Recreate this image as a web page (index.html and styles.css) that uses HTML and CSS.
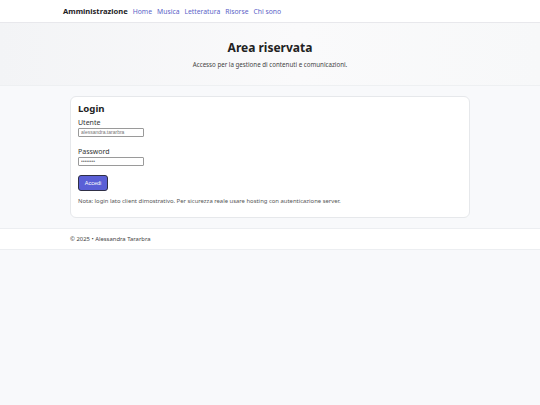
FILE: index.html
```html
<!DOCTYPE html>
<html lang="it">
<head>
    <meta charset="UTF-8">
    <meta name="viewport" content="width=device-width, initial-scale=1.0">
    <title>Area riservata</title>
    <link rel="stylesheet" href="styles.css">
</head>
<body>
    <nav class="topbar">
        <div class="nav-inner">
            <a href="#" class="brand">Amministrazione</a>
            <a href="#">Home</a>
            <a href="#">Musica</a>
            <a href="#">Letteratura</a>
            <a href="#">Risorse</a>
            <a href="#">Chi sono</a>
        </div>
    </nav>

    <header class="hero">
        <h1>Area riservata</h1>
        <p>Accesso per la gestione di contenuti e comunicazioni.</p>
    </header>

    <main class="container">
        <section class="card">
            <h2>Login</h2>
            <form class="login" onsubmit="return false">
                <label for="user">Utente</label>
                <input id="user" type="text" value="alessandra.tararbra">
                <label for="pass" class="spaced">Password</label>
                <input id="pass" type="password" value="password">
                <button type="submit">Accedi</button>
            </form>
            <p class="note">Nota: login lato client dimostrativo. Per sicurezza reale usare hosting con autenticazione server.</p>
        </section>
    </main>

    <footer class="footer">
        <div class="container">© 2025 • Alessandra Tararbra</div>
    </footer>
</body>
</html>
```

FILE: styles.css
```css
body {
    font-family: 'Noto Sans', sans-serif;
    margin: 0;
    padding: 0;
    background: #f8f9fb;
    color: #222;
}

.topbar {
    background: white;
    border-bottom: 1px solid #e8e8ec;
    height: 22px;
}

.nav-inner {
    width: 414px;
    margin: 0 auto;
    display: flex;
    align-items: center;
    gap: 5px;
    height: 22px;
    font-size: 6.8px;
}

.nav-inner a {
    color: #5b5fc7;
    text-decoration: none;
}

.nav-inner .brand {
    color: #1d1d1f;
    font-weight: bold;
    font-size: 7.6px;
}

.hero {
    background: linear-gradient(90deg, #f3f4f6, #fafafb 55%, #f7f8f9);
    border-bottom: 1px solid #eef0f2;
    text-align: center;
    padding: 17px 0 16px;
}

.hero h1 {
    font-size: 12px;
    line-height: 16px;
    margin: 0 0 4px;
    color: #222;
}

.hero p {
    font-size: 6.2px;
    line-height: 9px;
    margin: 0;
    color: #444;
}

.container {
    width: 400px;
    margin: 0 auto;
}

main.container {
    padding: 10px 0;
}

.card {
    background: white;
    border: 1px solid #e6e8eb;
    border-radius: 6px;
    padding: 6px 7px 12px;
}

.card h2 {
    font-size: 9.6px;
    line-height: 12px;
    margin: 0 0 1.5px;
}

.login {
    display: flex;
    flex-direction: column;
    align-items: flex-start;
}

.login label {
    font-size: 7px;
    line-height: 11px;
    color: #333;
}

.login .spaced {
    margin-top: 9px;
}

.login input {
    width: 66px;
    height: 9px;
    box-sizing: border-box;
    border: 1px solid #9a9a9a;
    border-radius: 1px;
    padding: 0 2px;
    font-family: 'Liberation Sans', sans-serif;
    font-size: 5px;
    color: #777;
}

.login button {
    margin-top: 9px;
    width: 30px;
    height: 16px;
    background: #5a5fd6;
    color: white;
    border: 1px solid #2f2f45;
    border-radius: 3px;
    font-family: 'Liberation Sans', sans-serif;
    font-size: 5.5px;
    padding: 0;
    cursor: pointer;
}

.note {
    font-size: 5.9px;
    line-height: 8px;
    color: #555;
    margin: 6px 0 0;
}

.footer {
    background: white;
    border-top: 1px solid #eceef1;
    border-bottom: 1px solid #eceef1;
    font-size: 5.9px;
    color: #444;
    height: 20px;
    display: flex;
    align-items: center;
}
```
